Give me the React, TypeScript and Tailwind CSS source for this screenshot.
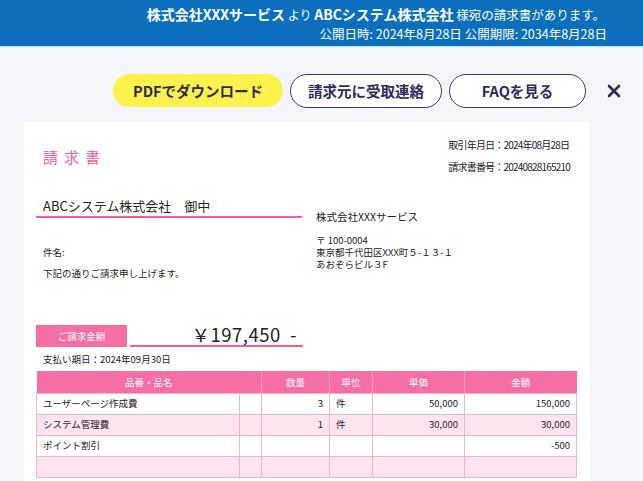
import React from "react";

const font = { fontFamily: '"Noto Sans CJK JP", "Noto Sans", sans-serif' };

type Row = { name: string; qty: string; unit: string; price: string; amount: string };
const rows: Row[] = [
  { name: "ユーザーページ作成費", qty: "3", unit: "件", price: "50,000", amount: "150,000" },
  { name: "システム管理費", qty: "1", unit: "件", price: "30,000", amount: "30,000" },
  { name: "ポイント割引", qty: "", unit: "", price: "", amount: "-500" },
  { name: "", qty: "", unit: "", price: "", amount: "" },
];

export default function App() {
  return (
    <div className="w-[643px] h-[481px] overflow-hidden bg-[#f4f5f9] text-[#222]" style={font}>
      {/* header bar */}
      <div className="h-[47px] bg-[#0b6fbd] border-b border-[#bfe3f7] flex flex-col items-end pr-[38px] pt-[3px] text-white">
        <div className="leading-[20px] whitespace-nowrap">
          <span className="font-bold text-[14px]">株式会社XXXサービス</span>
          <span className="text-[12px]"> より </span>
          <span className="font-bold text-[14px]">ABCシステム株式会社</span>
          <span className="text-[12.5px]"> 様宛の請求書があります。</span>
        </div>
        <div className="text-[12.5px] leading-[18px] whitespace-nowrap -mr-[2px]">
          公開日時: 2024年8月28日 公開期限: 2034年8月28日
        </div>
      </div>

      {/* buttons */}
      <div className="h-[75px] flex items-center justify-end pr-[22px] pt-[12px] gap-[7px] text-[#2b2b5e]">
        <button className="h-[33px] w-[170px] rounded-full bg-[#fdf24b] font-bold text-[14.5px]">
          PDFでダウンロード
        </button>
        <button className="h-[34px] w-[152px] rounded-full border-[1.5px] border-[#3a3a6a] bg-white font-bold text-[14.5px]">
          請求元に受取連絡
        </button>
        <button className="h-[34px] w-[137px] rounded-full border-[1.5px] border-[#3a3a6a] bg-white font-bold text-[14.5px]">
          FAQを見る
        </button>
        <div className="w-[28px] flex justify-end">
          <svg width="14" height="14" viewBox="0 0 14 14">
            <path d="M2 2 L12 12 M12 2 L2 12" stroke="#2b2b5e" strokeWidth="2.6" strokeLinecap="round" />
          </svg>
        </div>
      </div>

      {/* invoice card */}
      <div className="ml-[24px] w-[566px] h-[400px] bg-white pt-[12px] pl-[12px] pr-[14px]">
        {/* top row */}
        <div className="flex justify-between items-start">
          <div className="mt-[12px] pl-[7px] text-[15px] leading-[22px] text-[#f0609c] tracking-[6px]">請求書</div>
          <div className="text-[10px] leading-[22px] pr-[6px] tracking-[-0.8px]">
            <div>取引年月日：2024年08月28日</div>
            <div>請求書番号：20240828165210</div>
          </div>
        </div>

        {/* addresses */}
        <div className="flex mt-[18px]">
          <div className="w-[266px]">
            <div className="h-[22px] border-b-2 border-[#f0609c] pl-[7px] text-[13px] leading-[20px]">
              ABCシステム株式会社　御中
            </div>
            <div className="mt-[26px] pl-[7px] text-[9.5px] leading-[16px]">件名:</div>
            <div className="mt-[5px] pl-[7px] text-[9.5px] leading-[16px]">下記の通りご請求申し上げます。</div>
          </div>
          <div className="ml-[14px]">
            <div className="mt-[12px] text-[10.5px] leading-[18px]">株式会社XXXサービス</div>
            <div className="mt-[8px] text-[9.5px] leading-[12px]">
              <div>〒 100-0004</div>
              <div>東京都千代田区XXX町５-１３-１</div>
              <div>あおぞらビル３F</div>
            </div>
          </div>
        </div>

        {/* amount */}
        <div className="flex items-end mt-[42px]">
          <div className="w-[91px] h-[22px] bg-[#f56fa6] text-white text-[9.5px] leading-[22px] text-center">
            ご請求金額
          </div>
          <div className="ml-[3px] w-[173px] h-[24px] border-b-2 border-[#f0609c] flex items-center justify-end pr-[6px] text-[18.5px] leading-[22px] tracking-[0.5px]">
            ￥197,450&nbsp;&nbsp;-
          </div>
        </div>
        <div className="pl-[7px] mt-[4px] text-[9.5px] leading-[16px]">支払い期日：2024年09月30日</div>

        {/* table */}
        <table className="mt-[4px] w-[540px] border-collapse text-[9.5px] table-fixed">
          <colgroup>
            <col className="w-[203px]" />
            <col className="w-[22px]" />
            <col className="w-[68px]" />
            <col className="w-[43px]" />
            <col className="w-[92px]" />
            <col className="w-[112px]" />
          </colgroup>
          <thead>
            <tr className="h-[22px] bg-[#f56fa6] text-white">
              <th colSpan={2} className="font-normal border-r border-[#f79cc1]">品番・品名</th>
              <th className="font-normal border-r border-[#f79cc1]">数量</th>
              <th className="font-normal border-r border-[#f79cc1]">単位</th>
              <th className="font-normal border-r border-[#f79cc1]">単価</th>
              <th className="font-normal">金額</th>
            </tr>
          </thead>
          <tbody>
            {rows.map((r, i) => (
              <tr key={i} className={`h-[21px] ${i % 2 === 1 ? "bg-[#fde4ef]" : "bg-white"}`}>
                <td className="border border-[#f1b3cd] pl-[6px]">{r.name}</td>
                <td className="border border-[#f1b3cd]"></td>
                <td className="border border-[#f1b3cd] text-right pr-[6px]">{r.qty}</td>
                <td className="border border-[#f1b3cd] pl-[6px]">{r.unit}</td>
                <td className="border border-[#f1b3cd] text-right pr-[6px]">{r.price}</td>
                <td className="border border-[#f1b3cd] text-right pr-[6px]">{r.amount}</td>
              </tr>
            ))}
          </tbody>
        </table>
      </div>
    </div>
  );
}
